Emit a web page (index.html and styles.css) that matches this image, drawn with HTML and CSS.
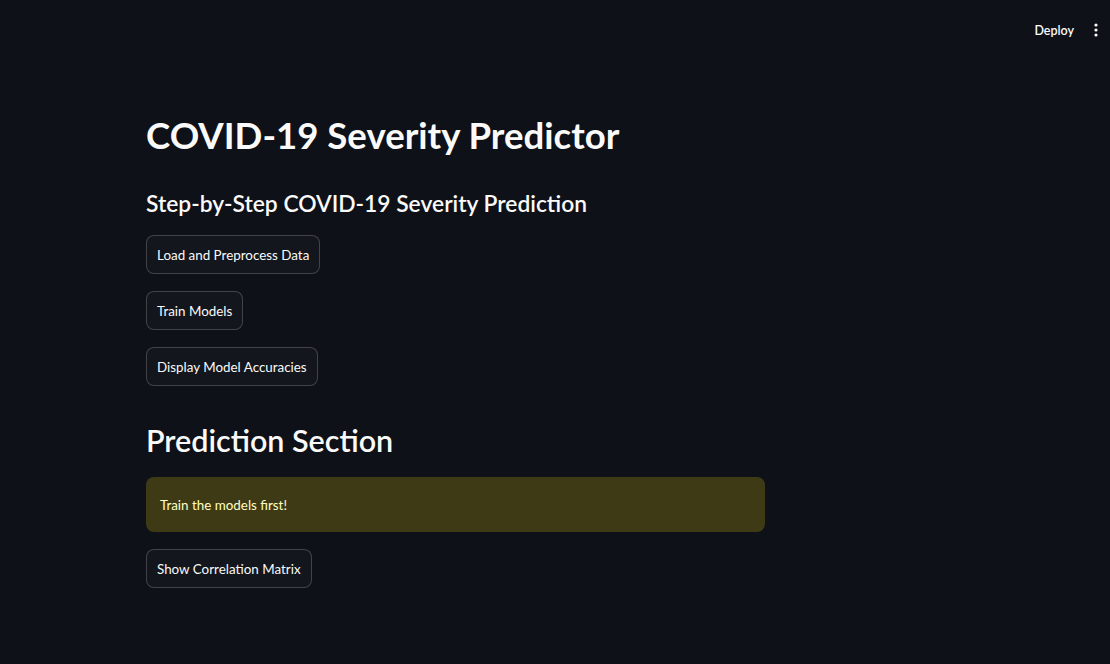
FILE: index.html
```html
<!DOCTYPE html>
<html>
<head>
<meta charset="utf-8">
<link rel="stylesheet" href="styles.css">
</head>
<body>
<header class="topbar">
  <span class="deploy">Deploy</span>
  <span class="menu"><svg width="4" height="14" viewBox="0 0 4 14"><circle cx="2" cy="2" r="1.6" fill="#fafafa"/><circle cx="2" cy="7" r="1.6" fill="#fafafa"/><circle cx="2" cy="12" r="1.6" fill="#fafafa"/></svg></span>
</header>
<main class="main">
  <h1 class="title">COVID-19 Severity Predictor</h1>
  <h2 class="subtitle">Step-by-Step COVID-19 Severity Prediction</h2>
  <div class="btnrow"><button class="btn">Load and Preprocess Data</button></div>
  <div class="btnrow"><button class="btn">Train Models</button></div>
  <div class="btnrow"><button class="btn">Display Model Accuracies</button></div>
  <h2 class="section">Prediction Section</h2>
  <div class="alert">Train the models first!</div>
  <div class="btnrow"><button class="btn">Show Correlation Matrix</button></div>
</main>
</body>
</html>
```
FILE: styles.css
```css
html, body {
  margin: 0;
  padding: 0;
  background: #0e1117;
  color: #fafafa;
  font-family: Lato, "Noto Sans", sans-serif;
}
.topbar {
  height: 60px;
  display: flex;
  align-items: center;
  justify-content: flex-end;
  padding-right: 10px;
  gap: 20px;
}
.deploy {
  font-size: 12.5px;
  font-weight: 600;
  color: #fafafa;
}
.menu {
  display: flex;
  align-items: center;
  width: 6px;
}
.main {
  display: flex;
  flex-direction: column;
  align-items: flex-start;
  padding-left: 146px;
  width: 619px;
}
.title {
  margin: 54px 0 0 0;
  font-size: 36.6px;
  line-height: 42px;
  font-weight: 700;
}
.subtitle {
  margin: 34px 0 0 0;
  font-size: 22.8px;
  line-height: 26px;
  font-weight: 600;
}
.btnrow {
  margin-top: 17px;
}
.subtitle + .btnrow { margin-top: 19px; }
.btn {
  font-family: inherit;
  height: 39px;
  padding: 0 10px;
  font-size: 13.4px;
  color: #fafafa;
  background: #13161d;
  border: 1px solid rgba(250,250,250,0.2);
  border-radius: 8px;
}
.section {
  margin: 36px 0 0 0;
  font-size: 30.5px;
  line-height: 36px;
  font-weight: 600;
}
.alert {
  margin-top: 19px;
  box-sizing: border-box;
  width: 619px;
  height: 55px;
  display: flex;
  align-items: center;
  padding: 0 14px;
  background: #3e3a16;
  color: #ffffc2;
  border-radius: 8px;
  font-size: 13.4px;
}
```
